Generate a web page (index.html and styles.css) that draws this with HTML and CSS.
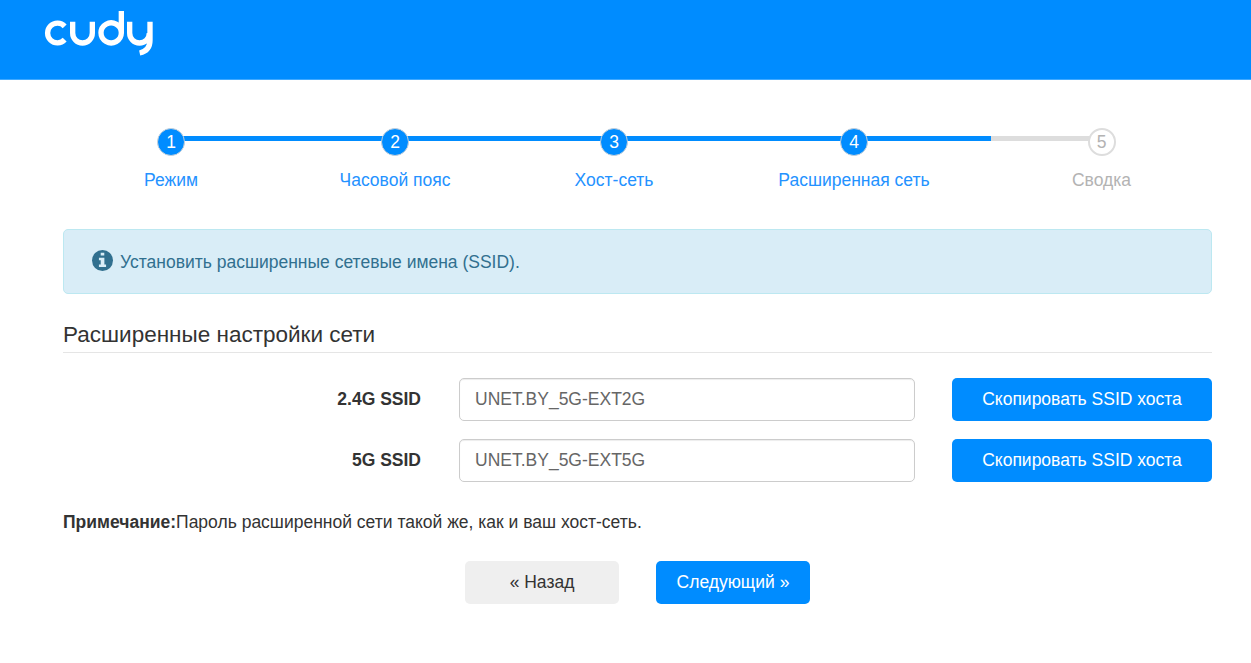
FILE: index.html
```html
<!DOCTYPE html>
<html lang="ru">
  <head>
    <meta charset="utf-8" />
    <meta name="viewport" content="width=device-width, initial-scale=1.0" />

    <title>Cudy</title>
    <link rel="stylesheet" href="styles.css">
  </head>
  <body>
    <header>
      <svg class="logo" viewBox="0 0 330 141" role="img" aria-label="cudy">
        <path d="M62 52 A29.500 29.500 0 1 0 62 92" />
        <path d="M86 38 V72 A29.500 30 0 0 0 145 72 V38" />
        <path d="M232 6 V72 A30.500 30 0 1 1 232 71" />
        <path d="M257 38 V72 A29.500 30 0 0 0 316 72 M318 38 V94 C318 117 306 128 287 132" />
      </svg>
    </header>

    <main>
      <ol class="steps">
        <li class="done"><span class="num">1</span><span class="name">Режим</span></li>
        <li class="done"><span class="num">2</span><span class="name">Часовой пояс</span></li>
        <li class="done"><span class="num">3</span><span class="name">Хост-сеть</span></li>
        <li class="done"><span class="num">4</span><span class="name">Расширенная сеть</span></li>
        <li><span class="num">5</span><span class="name">Сводка</span></li>
      </ol>

      <div class="alert">
        <svg class="info-icon" viewBox="0 0 20 20">
          <circle cx="10" cy="10" r="10" />
          <path d="M8.300 2.500h3.400v2.700h-3.400z M6.600 7.300h5.200v6.500h1.600v2.500h-6.800v-2.500h1.700v-4h-1.700z" />
        </svg>
        <span>Установить расширенные сетевые имена (SSID).</span>
      </div>

      <form>
        <h3>Расширенные настройки сети</h3>
        <div class="form-group">
          <label for="ssid2g">2.4G SSID</label>
          <input type="text" id="ssid2g" value="UNET.BY_5G-EXT2G" />
          <button type="button" class="btn btn-primary">Скопировать SSID хоста</button>
        </div>
        <div class="form-group">
          <label for="ssid5g">5G SSID</label>
          <input type="text" id="ssid5g" value="UNET.BY_5G-EXT5G" />
          <button type="button" class="btn btn-primary">Скопировать SSID хоста</button>
        </div>
        <p class="note"><b>Примечание:</b>Пароль расширенной сети такой же, как и ваш хост-сеть.</p>
        <div class="actions">
          <button type="button" class="btn">« Назад</button>
          <button type="submit" class="btn btn-primary">Следующий »</button>
        </div>
      </form>
    </main>
  </body>
</html>
```
FILE: styles.css
```css
* {
  box-sizing: border-box;
}

body {
  margin: 0;
  background: #fff;
  color: #333;
  font-family: "Liberation Sans", Arial, sans-serif;
  font-size: 17.5px;
  line-height: 26px;
}

/* Header */
header {
  height: 80px;
  padding: 9px 0 0 44px;
  background: #008cff;
  border-bottom: 1px solid #40a9ff;
}

.logo {
  display: block;
  width: 110px;
  height: 47px;
  fill: none;
  stroke: #fff;
  stroke-width: 16;
}

main {
  padding: 48px 39px 0 63px;
}

/* Steps */
.steps {
  display: grid;
  grid-template-columns: 216px 232px 206px 274px 221px;
  margin: 0;
  padding: 0;
  list-style: none;
  color: #b3b3b3;
}

.steps li {
  display: flex;
  flex-direction: column;
  align-items: center;
  background: linear-gradient(#ddd, #ddd) 0 8px / 100% 5px no-repeat;
}

.steps .done {
  color: #2492ff;
  background-image: linear-gradient(#008cff, #008cff);
}

.steps li:first-child {
  background-position: 100% 8px;
  background-size: 50% 5px;
}

.steps li:last-child {
  background-size: 50% 5px;
}

.num {
  width: 28px;
  height: 28px;
  border: 2px solid #ddd;
  border-radius: 50%;
  background: #fff;
  line-height: 25px;
  text-align: center;
}

.done .num {
  border: 1px solid #c5d0da;
  background: #008cff;
  color: #fff;
  line-height: 27px;
}

.name {
  margin-top: 11px;
}

/* Info message */
.alert {
  display: flex;
  align-items: center;
  height: 65px;
  margin-top: 36.4px;
  padding: 0 28px;
  border: 1px solid #bce8f1;
  border-radius: 5px;
  background: #d9edf7;
  color: #31708f;
}

.info-icon {
  width: 21px;
  height: 21px;
  margin: -2px 7px 0 0;
  fill: #31708f;
}

.info-icon path {
  fill: #d9edf7;
}

/* Form */
h3 {
  height: 34px;
  margin: 24.600px 0 25px;
  border-bottom: 1px solid #e5e5e5;
  font-size: 22.5px;
  font-weight: normal;
  line-height: 31px;
}

.form-group {
  display: grid;
  grid-template-columns: 358px 456px 260px;
  column-gap: 37.5px;
  align-items: center;
  margin-bottom: 18px;
}

label {
  font-weight: bold;
  text-align: right;
}

input {
  height: 43px;
  margin-left: 0.5px;
  padding: 1px 15px 0;
  border: 1px solid #ccc;
  border-radius: 5px;
  box-shadow: inset 0 1px 1px rgba(0, 0, 0, 0.075);
  color: #666;
  font: inherit;
}

.btn {
  height: 43px;
  padding: 0;
  border: none;
  border-radius: 5px;
  background: #efefef;
  color: #333;
  font: inherit;
}

.btn-primary {
  background: #008cff;
  color: #fff;
}

.note {
  margin: 27px 0 26px;
}

.actions {
  display: flex;
  justify-content: center;
  gap: 37px;
}

.actions .btn {
  width: 154px;
}
```
